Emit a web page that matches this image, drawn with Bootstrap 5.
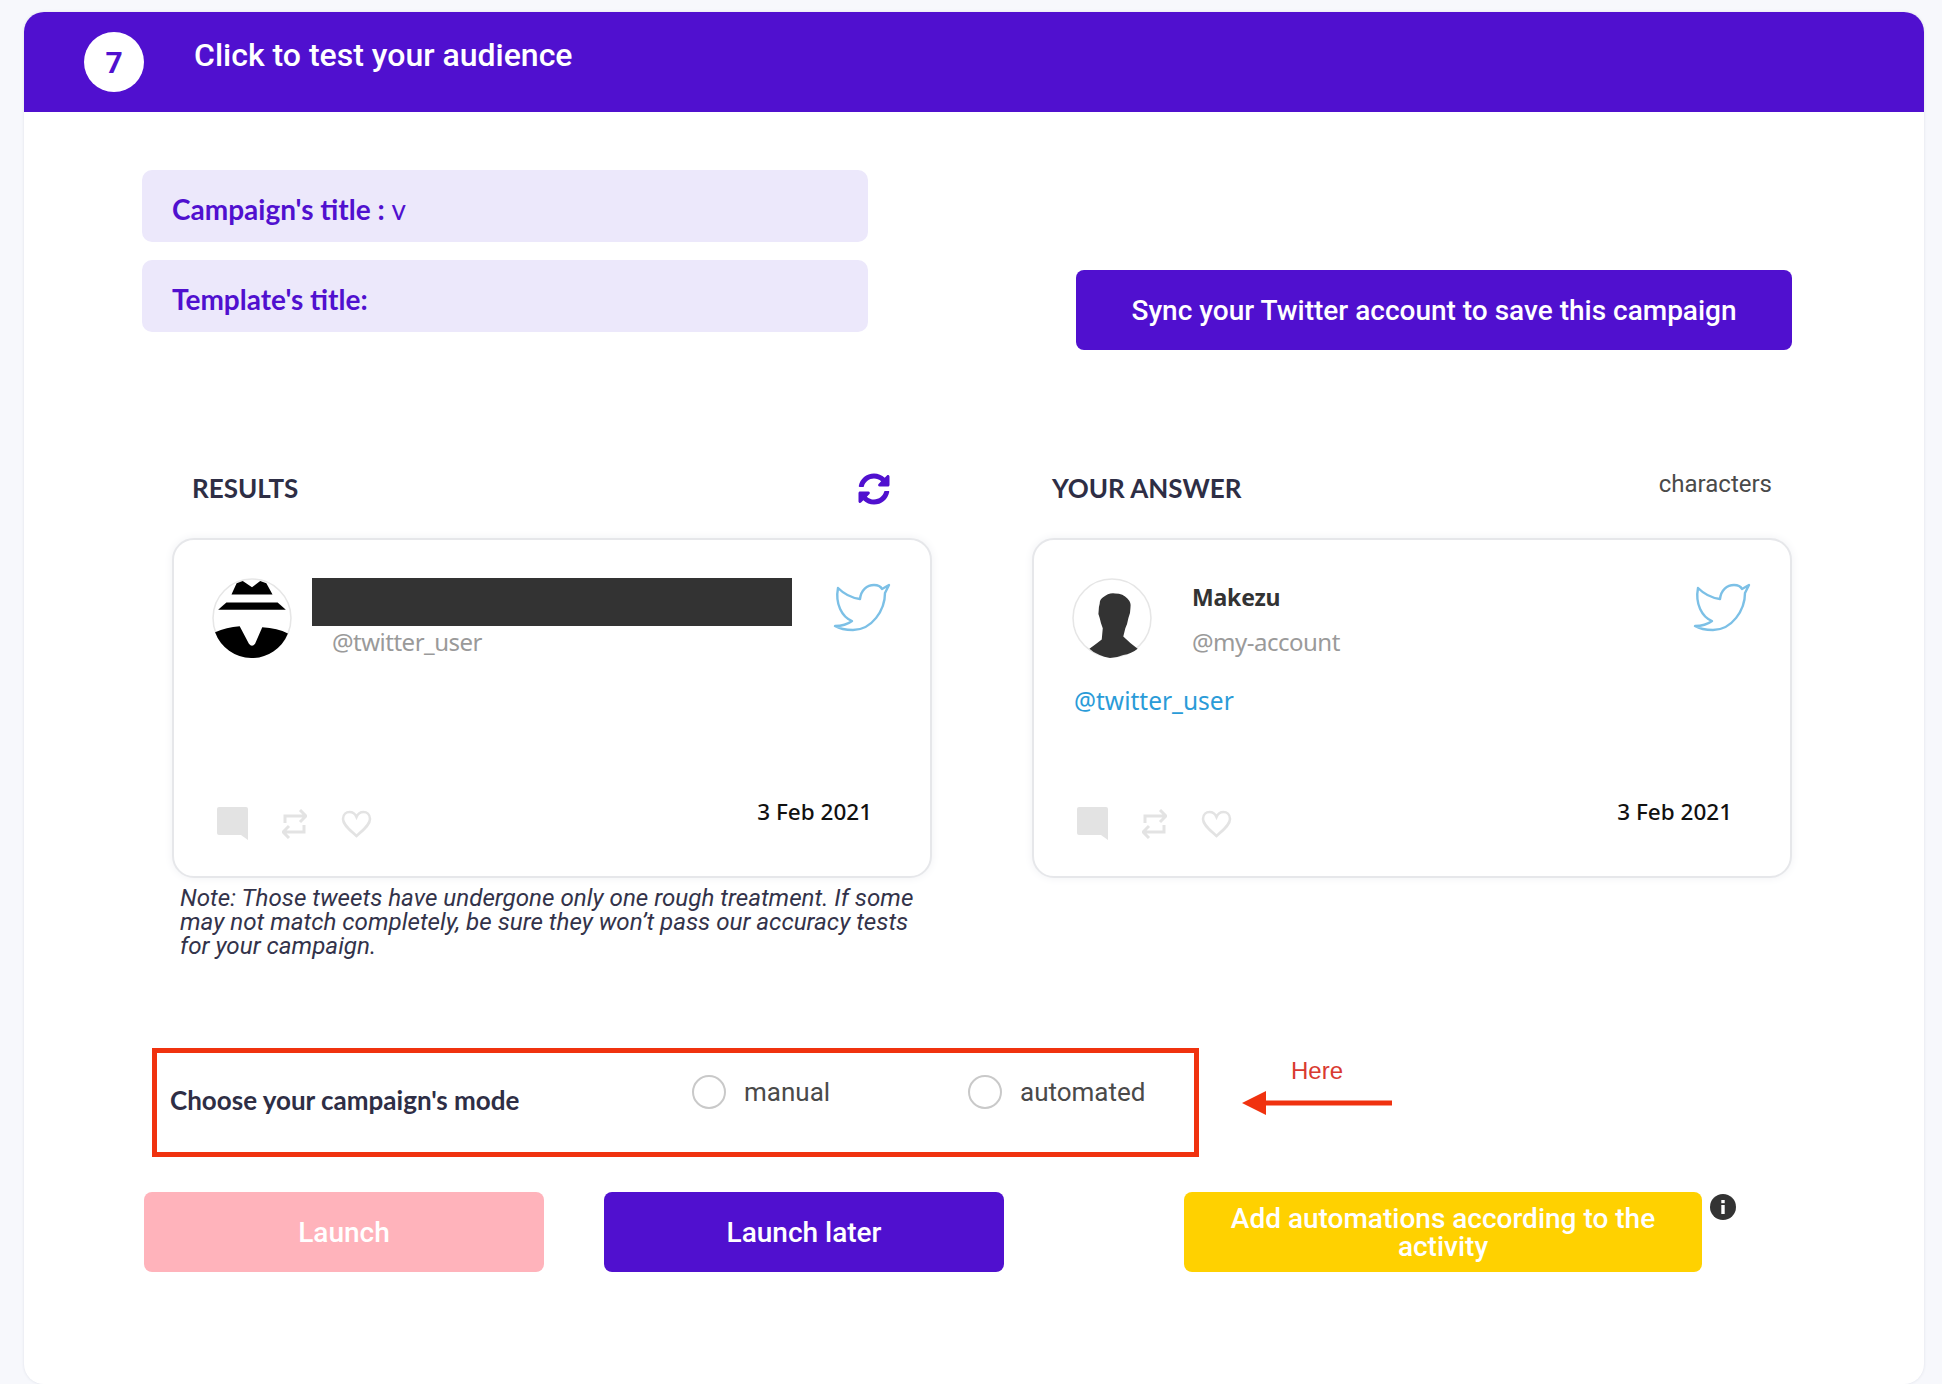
<!DOCTYPE html>
<html lang="en">
<head>
<meta charset="utf-8">
<title>Click to test your audience</title>
<link href="https://cdn.jsdelivr.net/npm/bootstrap@5.3.0/dist/css/bootstrap.min.css" rel="stylesheet">
<style>
html,body{height:1384px;overflow:hidden}
body{background:#f7f8fc;padding:12px 18px 0 24px;font-family:"Roboto",sans-serif}
.step-shell{height:1372px;border:0;border-radius:20px;background:#fff;box-shadow:0 0 3px #dcdfe8;overflow:hidden}
.step-head{height:100px;background:#5010cf;color:#fff;border:0;border-radius:0;padding:20px 0 0 60px;gap:50px}
.step-num{width:60px;height:60px;background:#fff;color:#5010cf;font:700 30px/60px "Roboto",sans-serif;text-align:center;padding-top:1px}
.step-title{font:500 32px/46px "Roboto",sans-serif;margin:0}
.step-body{padding:58px 0 0 0}
.top-row{padding-left:118px;height:180px}
.title-stack{width:726px;gap:18px}
.title-box{height:72px;background:#ece8fb;border-radius:10px;padding:17px 30px 0;font:700 28px/44px "Lato",sans-serif;color:#5010cf}
.title-box span{font-weight:400}
.btn-sync{width:716px;height:80px;margin:100px 0 0 208px;padding-top:8px;background:#5010cf;color:#fff;border:0;border-radius:8px;font:500 28px/1 "Roboto",sans-serif}
.tweets{margin:120px 0 0 148px;gap:100px;width:1620px}
.tweet-col{width:760px}
.tweet-head{height:36px;margin-bottom:32px;padding:0 42px 0 20px}
.tweet-head h3{font:700 26px/36px "Lato",sans-serif;color:#2e2e45;margin:0}
.tweet-head svg{margin-top:1px}
.tweet-head .char{font:400 24px/28px "Roboto",sans-serif;color:#4a4a4a;margin:-8px -22px 0 0}
.tweet-card{height:340px;border:2px solid #e6e7ea;border-radius:22px;box-shadow:0 0 10px #f0f1f4;background:#fff;padding:38px 39px 36px 38px}
.avatar{width:80px;height:80px;flex:none}
.who{margin-left:20px}
.name-bar{width:480px;height:48px;background:#333}
.name-txt{height:48px;font:700 23px/38px "Noto Sans",sans-serif;color:#333;margin-left:20px;letter-spacing:-.2px}
.handle{font:400 24px/32px "Noto Sans",sans-serif;color:#9a9a9a;margin-left:20px;letter-spacing:-.5px}
.bird{width:58px;height:49px;margin-top:5px;flex:none}
.mention{font:400 24.5px/32px "Noto Sans",sans-serif;color:#2a9bd8;margin:27px 0 0 2px}
.tweet-foot{margin-top:auto;padding:0 19px 0 5px}
.acts{gap:34px}
.tw-date{font:500 22.5px/28px "Noto Sans",sans-serif;color:#111;margin-top:-9px}
.note{font:italic 400 24.2px/24px "Roboto",sans-serif;color:#33334a;margin:8px 0 0 8px;width:745px}
.mode-row{margin:90px 0 0 128px}
.mode-box{width:1047px;height:109px;border:5px solid #f0320f;padding-left:13px}
.mode-lbl{width:522px;flex:none;font:700 26px/36px "Lato",sans-serif;color:#2e2e45;margin-top:29px}
.mode-opt{width:276px;flex:none;margin-top:22px;gap:18px}
.mode-opt:last-child{width:200px}
.mode-opt .form-check-input{width:34px;height:34px;margin:0;border:2px solid #c9c9c9;flex:none}
.mode-opt label{font:400 26px/34px "Roboto",sans-serif;color:#4a4a4a}
.here{margin-left:43px;width:150px;color:#d93a30;font:400 24px/28px "Liberation Sans",sans-serif;padding-top:9px}
.here svg{display:block;margin-top:6px}
.act-row{margin:35px 0 0 120px}
.btn-act{height:80px;width:400px;border:0;border-radius:8px;color:#fff;font:500 28px/28px "Roboto",sans-serif;padding:2px 30px 0}
.btn-pink,.btn-pink:hover{background:#ffb3bb;color:#fff}
.btn-violet,.btn-violet:hover{background:#5010cf;color:#fff;margin-left:60px}
.btn-gold,.btn-gold:hover{background:#ffd100;color:#fff;margin-left:180px;width:518px}
.info-i{margin:2px 0 0 8px;flex:none}
</style>
</head>
<body>
<div class="card step-shell">
  <div class="card-header step-head d-flex align-items-start">
    <div class="step-num rounded-circle">7</div>
    <h2 class="step-title">Click to test your audience</h2>
  </div>
  <div class="card-body step-body">
    <div class="d-flex top-row align-items-start">
      <div class="d-flex flex-column title-stack">
        <div class="title-box">Campaign's title : <span>v</span></div>
        <div class="title-box">Template's title:</div>
      </div>
      <button class="btn btn-sync" type="button">Sync your Twitter account to save this campaign</button>
    </div>

    <div class="d-flex tweets">
      <div class="tweet-col">
        <div class="d-flex justify-content-between align-items-center tweet-head">
          <h3>RESULTS</h3>
          <svg width="32" height="32" viewBox="0 0 512 512" fill="#5010cf"><path d="M370.72 133.28C339.458 104.008 298.888 87.962 255.848 88c-77.458.068-144.328 53.178-162.791 126.85-1.344 5.363-6.122 9.15-11.651 9.15H24.103c-7.498 0-13.194-6.807-11.807-14.176C33.933 94.924 134.813 8 256 8c66.448 0 126.791 26.136 171.315 68.685L463.03 40.97C478.149 25.851 504 36.559 504 57.941V192c0 13.255-10.745 24-24 24H345.941c-21.382 0-32.09-25.851-16.971-40.971l41.75-41.749zM32 296h134.059c21.382 0 32.09 25.851 16.971 40.971l-41.75 41.75c31.262 29.273 71.835 45.319 114.876 45.28 77.418-.07 144.315-53.144 162.787-126.849 1.344-5.363 6.122-9.15 11.651-9.15h57.304c7.498 0 13.194 6.807 11.807 14.176C478.067 417.076 377.187 504 256 504c-66.448 0-126.791-26.136-171.315-68.685L48.97 471.03C33.851 486.149 8 475.441 8 454.059V320c0-13.255 10.745-24 24-24z"/></svg>
        </div>
        <div class="tweet-card d-flex flex-column">
          <div class="d-flex align-items-start">
            <svg class="avatar" viewBox="0 0 78 78"><circle cx="39" cy="39" r="38" fill="#fff" stroke="#e6e6e6" stroke-width="1.5"/><path d="M19 16L24 5L30 3L39 9L47 3L53 5L59 16Z"/><path d="M6 31L14 24H64L72 31Z"/><path d="M3 53Q14 48 27 47L36 64Q39 68 42 64L49 48Q64 49 74 54A38 38 0 0 1 3 53Z"/></svg>
            <div class="who">
              <div class="name-bar"></div>
              <div class="handle">@twitter_user</div>
            </div>
            <svg class="bird ms-auto" viewBox="13 13 58 49" fill="none" stroke="#7cc0e6" stroke-width="2.4" stroke-linejoin="round"><path d="M18 18C24 24 32 28 40 29C41 20 47 15 54 15C58 15 61 17 62 19L69 15L65 23C65 40 52 60 33 60C26 60 20 59 15 56C22 56 28 54 32 51C22 47 15 34 18 18Z"/></svg>
          </div>
          <div class="d-flex justify-content-between align-items-start tweet-foot">
            <div class="d-flex acts align-items-center">
              <svg width="31" height="33" viewBox="0 0 31 33" fill="#e3e3e3"><path d="M2 0H29Q31 0 31 2V33L24 28H2Q0 28 0 26V2Q0 0 2 0Z"/></svg>
              <svg width="25" height="30" viewBox="0 0 25 30" fill="none" stroke="#e3e3e3" stroke-width="3"><path d="M3 14V7H22M18 1L24 7L18 13M22 16V23H3M7 17L1 23L7 29"/></svg>
              <svg width="31" height="28" viewBox="0 0 31 28" fill="none" stroke="#e3e3e3" stroke-width="2.6"><path d="M15.5 26C9 20 2 15 2 9C2 4 5.5 2 8.5 2C11.5 2 14 3.5 15.5 7C17 3.5 19.5 2 22.5 2C25.5 2 29 4 29 9C29 15 22 20 15.5 26Z"/></svg>
            </div>
            <div class="tw-date">3 Feb 2021</div>
          </div>
        </div>
        <p class="note">Note: Those tweets have undergone only one rough treatment. If some may not match completely, be sure they won’t pass our accuracy tests for your campaign.</p>
      </div>

      <div class="tweet-col">
        <div class="d-flex justify-content-between align-items-center tweet-head">
          <h3>YOUR ANSWER</h3>
          <div class="char">characters</div>
        </div>
        <div class="tweet-card d-flex flex-column">
          <div class="d-flex align-items-start">
            <svg class="avatar" viewBox="0 0 78 78"><circle cx="39" cy="39" r="38" fill="#fff" stroke="#e6e6e6" stroke-width="1.5"/><path fill="#333" d="M27 25Q27 21 30 19Q36 14 42 15Q50 15 54 20Q58 24 57 29Q57 35 55 39Q54 45 52 49L50 57Q56 63 64 69Q58 74 50 75Q43 78 37 78Q31 77 27 75Q21 73 17 69Q24 64 29 60L30 49Q28 44 27 39Q25 35 26 32Q26 28 27 25Z"/></svg>
            <div class="who">
              <div class="name-txt">Makezu</div>
              <div class="handle">@my-account</div>
            </div>
            <svg class="bird ms-auto" viewBox="13 13 58 49" fill="none" stroke="#7cc0e6" stroke-width="2.4" stroke-linejoin="round"><path d="M18 18C24 24 32 28 40 29C41 20 47 15 54 15C58 15 61 17 62 19L69 15L65 23C65 40 52 60 33 60C26 60 20 59 15 56C22 56 28 54 32 51C22 47 15 34 18 18Z"/></svg>
          </div>
          <div class="mention">@twitter_user</div>
          <div class="d-flex justify-content-between align-items-start tweet-foot">
            <div class="d-flex acts align-items-center">
              <svg width="31" height="33" viewBox="0 0 31 33" fill="#e3e3e3"><path d="M2 0H29Q31 0 31 2V33L24 28H2Q0 28 0 26V2Q0 0 2 0Z"/></svg>
              <svg width="25" height="30" viewBox="0 0 25 30" fill="none" stroke="#e3e3e3" stroke-width="3"><path d="M3 14V7H22M18 1L24 7L18 13M22 16V23H3M7 17L1 23L7 29"/></svg>
              <svg width="31" height="28" viewBox="0 0 31 28" fill="none" stroke="#e3e3e3" stroke-width="2.6"><path d="M15.5 26C9 20 2 15 2 9C2 4 5.5 2 8.5 2C11.5 2 14 3.5 15.5 7C17 3.5 19.5 2 22.5 2C25.5 2 29 4 29 9C29 15 22 20 15.5 26Z"/></svg>
            </div>
            <div class="tw-date">3 Feb 2021</div>
          </div>
        </div>
      </div>
    </div>

    <div class="d-flex mode-row">
      <div class="d-flex align-items-start mode-box">
        <div class="mode-lbl">Choose your campaign's mode</div>
        <div class="d-flex align-items-center mode-opt"><input class="form-check-input" type="radio" name="mode" id="m1"><label for="m1">manual</label></div>
        <div class="d-flex align-items-center mode-opt"><input class="form-check-input" type="radio" name="mode" id="m2"><label for="m2">automated</label></div>
      </div>
      <div class="here text-center">Here
        <svg width="150" height="24" viewBox="0 0 150 24"><path fill="#f0320f" d="M0 12L24 0V9.5H150V14.5H24V24Z"/></svg>
      </div>
    </div>

    <div class="d-flex align-items-start act-row">
      <button class="btn btn-act btn-pink" type="button">Launch</button>
      <button class="btn btn-act btn-violet" type="button">Launch later</button>
      <button class="btn btn-act btn-gold" type="button">Add automations according to the activity</button>
      <svg class="info-i" width="26" height="26" viewBox="0 0 26 26"><circle cx="13" cy="13" r="13" fill="#333"/><rect x="11.3" y="11" width="3.4" height="9" fill="#fff"/><rect x="11.3" y="6" width="3.4" height="3.2" fill="#fff"/></svg>
    </div>
  </div>
</div>
<script src="https://cdn.jsdelivr.net/npm/bootstrap@5.3.0/dist/js/bootstrap.bundle.min.js"></script>
</body>
</html>
